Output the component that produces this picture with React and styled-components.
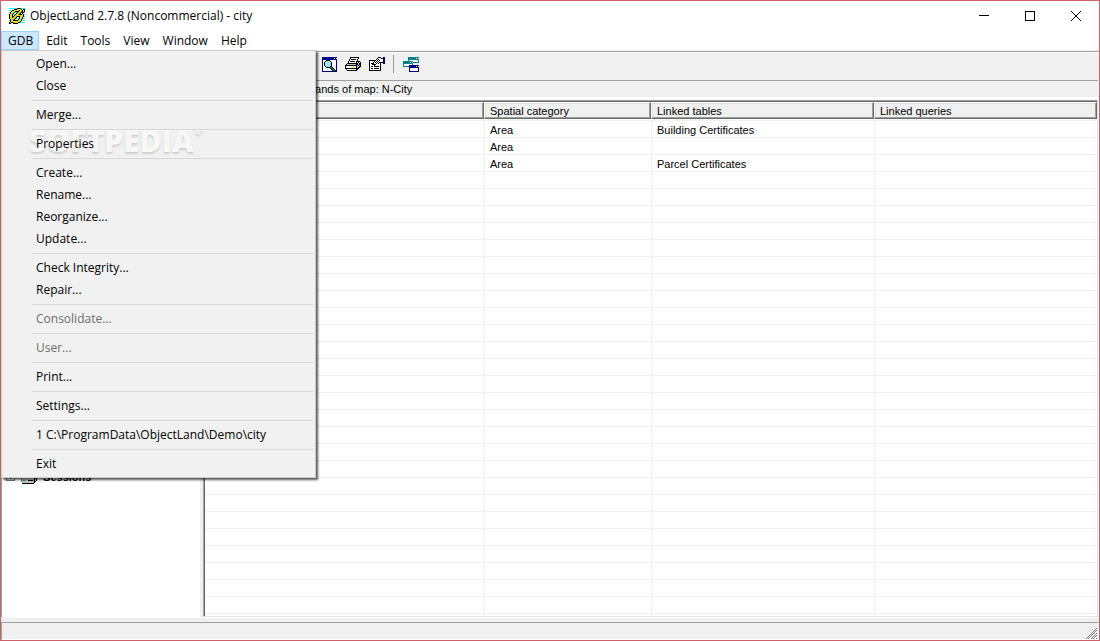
import React from 'react';
import styled, { createGlobalStyle, css } from 'styled-components';

const GlobalStyle = createGlobalStyle`
  * {
    box-sizing: border-box;
  }

  body {
    margin: 0;
  }

  button {
    font: inherit;
    color: inherit;
    background: none;
    border: 0;
    margin: 0;
    padding: 0;
  }
`;

const uiFont = css`
  font-family: 'Open Sans', 'Noto Sans', sans-serif;
  font-size: 12px;
  line-height: 16px;
`;

const classicFont = css`
  font-family: 'Liberation Sans', Arial, sans-serif;
  font-size: 11px;
  line-height: 16px;
`;

const Window = styled.div`
  ${uiFont}
  height: 100vh;
  min-height: 520px;
  display: flex;
  flex-direction: column;
  border: 1px solid #cd6069;
  background: #fff;
  color: #000;
`;

const TitleBar = styled.header`
  height: 30px;
  flex: none;
  display: flex;
  align-items: center;
  padding-left: 8px;
`;

const Title = styled.h1`
  flex: 1;
  margin: 0 0 0 5px;
  font-size: 12px;
  font-weight: 400;
  line-height: 16px;
`;

const WindowButton = styled.button`
  width: 46px;
  height: 30px;
  display: flex;
  align-items: center;
  justify-content: center;
`;

const MenuBar = styled.nav`
  height: 19px;
  flex: none;
  display: flex;
`;

const MenuEntry = styled.div`
  position: relative;
`;

const MenuTitle = styled.button`
  height: 19px;
  padding: 0 5px 0 6px;
  line-height: 17px;
  border: 1px solid ${props => props.$open ? '#99d1ff' : 'transparent'};
  background: ${props => props.$open ? '#cce8ff' : 'transparent'};
`;

const Popup = styled.div`
  position: absolute;
  z-index: 2;
  top: 19px;
  left: 0;
  width: 315px;
  padding: 2px;
  border: 1px solid #ccc;
  background: #f1f1f1;
  box-shadow: 2px 2px 2px rgba(0, 0, 0, 0.65);
`;

const PopupItem = styled.button`
  display: block;
  width: 100%;
  height: 22px;
  padding-left: 32px;
  line-height: 22px;
  text-align: left;
  white-space: nowrap;
  color: ${props => props.disabled ? '#6d6d6d' : '#000'};
`;

const Divider = styled.hr`
  height: 1px;
  margin: 3px 0 3px 28px;
  border: 0;
  background: #d7d7d7;
`;

const Watermark = styled.div`
  position: absolute;
  z-index: -1;
  top: 74px;
  left: 27px;
  font-size: 30px;
  font-weight: 800;
  line-height: 32px;
  color: #f7f7f7;
  text-shadow: 0 2px 2px rgba(0, 0, 0, 0.14);
  pointer-events: none;

  sup {
    font-size: 10px;
    line-height: 10px;
    vertical-align: top;
  }
`;

const Toolbar = styled.div`
  height: 29px;
  flex: none;
  display: flex;
  align-items: flex-start;
  margin-top: 1px;
  padding-left: 316px;
  border-top: 1px solid #a0a0a0;
  background: #f0f0f0;
  box-shadow: 0 -1px #f0f0f0, inset 0 1px #fff;
`;

const ToolButton = styled.button`
  width: 24px;
  height: 24px;
  display: flex;
  align-items: center;
  justify-content: center;
`;

const ToolSeparator = styled.span`
  width: 1px;
  height: 18px;
  margin: 3px 5px 0 4px;
  background: #a0a0a0;
`;

const Content = styled.main`
  flex: 1;
  min-height: 0;
  display: flex;
  margin-right: 1px;
  padding-bottom: 1px;
`;

const TreePane = styled.aside`
  width: 199px;
  flex: none;
  padding: 387px 0 0 4px;
  border-left: 1px solid #a0a0a0;
  border-top: 1px solid #a0a0a0;
  overflow: hidden;
`;

const TreeNode = styled.div`
  ${classicFont}
  height: 17px;
  display: flex;
  align-items: center;
  font-weight: 700;
`;

const Expander = styled.button`
  width: 9px;
  height: 9px;
  margin-right: 6px;
  border: 1px solid #808080;
  display: flex;
`;

const Splitter = styled.div`
  width: 3px;
  background: #f0f0f0;
`;

const ListPane = styled.section`
  flex: 1;
  min-width: 0;
  display: flex;
  flex-direction: column;
`;

const Caption = styled.h2`
  ${classicFont}
  height: 17px;
  flex: none;
  margin: 0 0 3px;
  padding-left: 106px;
  border-top: 1px solid #a0a0a0;
  background: #f0f0f0;
  font-weight: 400;
`;

const ListFrame = styled.div`
  flex: 1;
  min-height: 0;
  overflow: hidden;
  border: 1px solid #a0a0a0;
  border-right-color: #e3e3e3;
  border-bottom-color: #e3e3e3;
  box-shadow: inset 1px 1px #696969;
  padding: 1px 0 0 1px;
`;

const Table = styled.table`
  ${classicFont}
  width: 100%;
  table-layout: fixed;
  border-collapse: separate;
  border-spacing: 0;
`;

const HeadCell = styled.th`
  width: ${props => props.$width || 'auto'};
  padding: 0 0 1px;
  font-weight: 400;
  text-align: left;
`;

const HeadFace = styled.div`
  height: 17px;
  padding-left: 5px;
  border: 1px solid #fff;
  border-right-color: #696969;
  border-bottom-color: #696969;
  background: #f0f0f0;
  box-shadow: inset -1px -1px #a0a0a0, inset 1px 1px #e3e3e3;
`;

const Cell = styled.td`
  height: 17px;
  padding: 2px 0 0 5px;
  line-height: 14px;
  border-top: 1px solid #f0f0f0;
  white-space: nowrap;

  & + & {
    border-left: 1px solid #f0f0f0;
  }
`;

const StatusBar = styled.footer`
  flex: none;
  padding-top: 4px;
  background: #f0f0f0;
`;

const StatusField = styled.div`
  height: 18px;
  display: flex;
  align-items: flex-end;
  justify-content: flex-end;
  border: 1px solid #a0a0a0;
  border-right-color: #fff;
  border-bottom-color: #fff;
`;

const palette = {
  K: '#000',
  W: '#fff',
  N: '#000080',
  T: '#008080',
  C: '#7fe8f0',
  A: '#00ffff',
  G: '#c0c0c0',
  D: '#808080',
  L: '#00d000',
  Y: '#ffff00',
  M: '#e6dc1e',
  O: '#8a8a00',
};

const art = {
  app: [
    'AAAAAAAAKKKKAAAA',
    'WWWWWKKKMMMMKWKK',
    'AAAKKMMMMMKMMKMK',
    'WWKMMMKKKKMMOKMK',
    'AKMMMKAAKMMOKKKA',
    'WKMMKWWKMMOKWKWW',
    'KMMKAAKMMOKKKMKA',
    'KMMKWKMMMMMMMMKW',
    'KMMKKMMOKKKMMMKA',
    'KMMKMMOKWWKMMKWW',
    'KMMMMOKAAAKMMKAA',
    'WKMMOKWWWKMMKWWW',
    'AKMMKKKKKMMMKAAA',
    'WKMMMMMMMMMKWWWW',
    'KMKKOMMMMKKAAAAA',
    'KKWWKKKKKWWWWWWW',
  ],
  preview: [
    'NNNNNNNNNNNNNNN',
    'NNNNNNNNNNNNWNW',
    'NNNNNNNNNNNNNNN',
    'NWWWKKKKWWWWWWN',
    'NWWKCCWCKWWWWWN',
    'NWKCWCCCCKWWWWN',
    'NWKCCCCWCKWWWWN',
    'NWKCWCCCCKWWWWN',
    'NWKCCCWCCKWWWWN',
    'NWWKCCCCKKWWWWN',
    'NWWWKKKKTTKWWWN',
    'NWWWWWWWKTTKWWN',
    'NWWWWWWWWKTTKWN',
    'NWWWWWWWWWKTTKN',
    'NNNNNNNNNNNKKNN',
  ],
  print: [
    '.....KKKKKKKKK..',
    '.....KWWWWWWWK..',
    '....KWKKKKKWK...',
    '....KWWWWWWWK...',
    '...KWKKKKKWKKKK.',
    '...KWWWWWWWK.K.K',
    '..KKKKKKKKKKKGKK',
    '.KGGGGGGGGGKKGKK',
    'KKKKKKKKKKKKGKGK',
    'KWWWWWWWWWWKGGKK',
    'KWWWWWWYYWWKGKK.',
    'KKKKKKKKKKKKKK..',
    '.KWWWWWWWWWKK...',
    '..KKKKKKKKKK....',
  ],
  properties: [
    '.........KKK..NN',
    '........KWWWKKNN',
    '.......KWKWWWWNN',
    'KKKKKKKWKWKWWWNN',
    'KWWWWKWKWKWWWWNN',
    'KWWWKWKWKWKKKKNN',
    'KWKKKWWKWKWK..NN',
    'KWWKKKKWWWWK....',
    'KWWWWKWWWWWK....',
    'KWKKWKKKKKWK....',
    'KWWWWWWWWWWK....',
    'KWKKWKKKKKWK....',
    'KWWWWWWWWWWK....',
    'KKKKKKKKKKKK....',
  ],
  windows: [
    '.....TTTTTTTTTTT',
    '.....TTTTTTTTWTW',
    '.....TTTTTTTTTTT',
    '.....TWWWWWWWWWT',
    'TTTTTTTTTTWWWWWT',
    'TTTTTTTWTWTTTTTT',
    'TTTTTTTTTT......',
    'TWWWWWWWWT......',
    'TWWWWWNNNNNNNNNN',
    'TTTTTTNNNNNNNWNW',
    '......NNNNNNNNNN',
    '......NWWWWWWWWN',
    '......NWWWWWWWWN',
    '......NWWWWWWWWN',
    '......NNNNNNNNNN',
  ],
  drive: [
    '................',
    '................',
    '................',
    '....DDDDDDDDDD..',
    '...DGGGGGGGGGGK.',
    '..DGGGGGGGGGGGK.',
    '.DGGGGGGGGGGGKK.',
    'DGGGGGGGGGGGKGK.',
    'DWWWWWWWWWWWWKGK',
    'DGGGGGGGGGGGGKGK',
    'DGLLGGGKKKKKGKGK',
    'DGGGGGGGGGGGGKK.',
    '.GGGGGGGGGGGGK..',
    '.KKKKKKKKKKKK...',
  ],
  plus: [
    '.......',
    '...K...',
    '...K...',
    '.KKKKK.',
    '...K...',
    '...K...',
    '.......',
  ],
  grip: [
    '..........D.',
    '.........D..',
    '........D.D.',
    '.......D.D..',
    '......D.D...',
    '.....D.D..D.',
    '....D.D..D..',
    '...D.D..D.D.',
    '..D.D..D.D..',
    '.D.D..D.D...',
    'D.D..D.D..D.',
  ],
};

const PixelIcon = ({ name }) => {
  const rows = art[name];
  return (
    <svg width={rows[0].length} height={rows.length} shapeRendering="crispEdges" aria-hidden="true">
      {rows.map((row, y) => row.split('').map((key, x) => (
        palette[key] ? <rect key={`${x}-${y}`} x={x} y={y} width="1" height="1" fill={palette[key]} /> : null
      )))}
    </svg>
  );
};

const gdbMenu = [
  ['Open...', 'Close'],
  ['Merge...'],
  ['Properties'],
  ['Create...', 'Rename...', 'Reorganize...', 'Update...'],
  ['Check Integrity...', 'Repair...'],
  ['Consolidate...'],
  ['User...'],
  ['Print...'],
  ['Settings...'],
  ['1 C:\\ProgramData\\ObjectLand\\Demo\\city'],
  ['Exit'],
];

const disabledItems = ['Consolidate...', 'User...'];

const lands = [
  ['', 'Area', 'Building Certificates', ''],
  ['', 'Area', '', ''],
  ['', 'Area', 'Parcel Certificates', ''],
];

// the grid keeps drawing empty lines below the last land
const emptyRows = Array.from({ length: 27 }, () => ['', '', '', '']);

const GdbPopup = () => (
  <Popup>
    {gdbMenu.map((group, i) => (
      <React.Fragment key={group[0]}>
        {i > 0 && <Divider />}
        {group.map(label => (
          <PopupItem key={label} disabled={disabledItems.includes(label)}>{label}</PopupItem>
        ))}
      </React.Fragment>
    ))}
    <Watermark>SOFTPEDIA<sup>®</sup></Watermark>
  </Popup>
);

const App = () => {
  return (
    <>
      <GlobalStyle />
      <Window>
        <TitleBar>
          <PixelIcon name="app" />
          <Title>ObjectLand 2.7.8 (Noncommercial) - city</Title>
          <WindowButton aria-label="Minimize">
            <svg width="10" height="10" shapeRendering="crispEdges"><path d="M0 4.5h10" stroke="#000" /></svg>
          </WindowButton>
          <WindowButton aria-label="Maximize">
            <svg width="10" height="10" shapeRendering="crispEdges"><path d="M.5 .5h9v9h-9z" fill="none" stroke="#000" /></svg>
          </WindowButton>
          <WindowButton aria-label="Close">
            <svg width="10" height="10"><path d="M0 0l10 10M10 0L0 10" stroke="#000" /></svg>
          </WindowButton>
        </TitleBar>
        <MenuBar>
          <MenuEntry>
            <MenuTitle $open>GDB</MenuTitle>
            <GdbPopup />
          </MenuEntry>
          {['Edit', 'Tools', 'View', 'Window', 'Help'].map(label => (
            <MenuEntry key={label}>
              <MenuTitle>{label}</MenuTitle>
            </MenuEntry>
          ))}
        </MenuBar>
        <Toolbar>
          <ToolButton aria-label="Preview"><PixelIcon name="preview" /></ToolButton>
          <ToolButton aria-label="Print"><PixelIcon name="print" /></ToolButton>
          <ToolButton aria-label="Properties"><PixelIcon name="properties" /></ToolButton>
          <ToolSeparator />
          <ToolButton aria-label="Windows"><PixelIcon name="windows" /></ToolButton>
        </Toolbar>
        <Content>
          <TreePane>
            <TreeNode>
              <Expander aria-label="Expand"><PixelIcon name="plus" /></Expander>
              <PixelIcon name="drive" />
              &nbsp;&nbsp;Sessions
            </TreeNode>
          </TreePane>
          <Splitter />
          <ListPane>
            <Caption>Lands of map: N-City</Caption>
            <ListFrame>
              <Table>
                <thead>
                  <tr>
                    <HeadCell $width="279px"><HeadFace /></HeadCell>
                    <HeadCell $width="167px"><HeadFace>Spatial category</HeadFace></HeadCell>
                    <HeadCell $width="223px"><HeadFace>Linked tables</HeadFace></HeadCell>
                    <HeadCell><HeadFace>Linked queries</HeadFace></HeadCell>
                  </tr>
                </thead>
                <tbody>
                  {[...lands, ...emptyRows].map((row, i) => (
                    <tr key={i}>
                      {row.map((text, j) => <Cell key={j}>{text}</Cell>)}
                    </tr>
                  ))}
                </tbody>
              </Table>
            </ListFrame>
          </ListPane>
        </Content>
        <StatusBar>
          <StatusField><PixelIcon name="grip" /></StatusField>
        </StatusBar>
      </Window>
    </>
  );
};

export default App;
